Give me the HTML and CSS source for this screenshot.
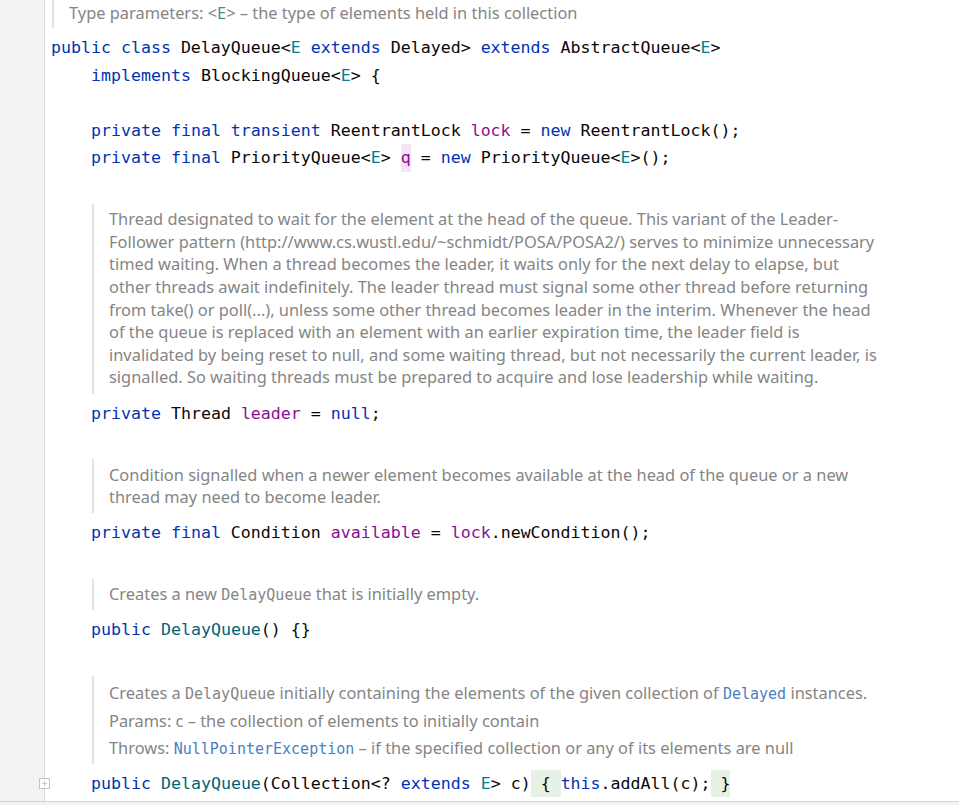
FILE: index.html
```html
<!DOCTYPE html>
<html>
<head>
<meta charset="utf-8">
<link rel="stylesheet" href="styles.css">
</head>
<body>
<div class="window">
  <div class="editor">
    <div class="gutter"></div>
    <svg class="fold" width="11" height="11" viewBox="0 0 11 11"><rect x="0.5" y="0.5" width="10" height="10" fill="#fff" stroke="#c4c4c4"/><path d="M3 5.5h5M5.5 3v5" stroke="#c4c4c4" fill="none"/></svg>
    <div class="code">
      <div class="doc doc-top"><p>Type parameters: &lt;<span class="dtp">E</span>&gt; – the type of elements held in this collection</p></div>
      <div class="line"><span class="kw">public class</span> DelayQueue&lt;<span class="tp">E</span> <span class="kw">extends</span> Delayed&gt; <span class="kw">extends</span> AbstractQueue&lt;<span class="tp">E</span>&gt;</div>
      <div class="line ind"><span class="kw">implements</span> BlockingQueue&lt;<span class="tp">E</span>&gt; {</div>
      <div class="line"></div>
      <div class="line ind"><span class="kw">private final transient</span> ReentrantLock <span class="fld">lock</span> = <span class="kw">new</span> ReentrantLock();</div>
      <div class="line ind"><span class="kw">private final</span> PriorityQueue&lt;<span class="tp">E</span>&gt; <span class="fld hl">q</span> = <span class="kw">new</span> PriorityQueue&lt;<span class="tp">E</span>&gt;();</div>
      <div class="line"></div>
      <div class="doc"><p>Thread designated to wait for the element at the head of the queue. This variant of the Leader-<br>Follower pattern (http://www.cs.wustl.edu/~schmidt/POSA/POSA2/) serves to minimize unnecessary<br>timed waiting. When a thread becomes the leader, it waits only for the next delay to elapse, but<br>other threads await indefinitely. The leader thread must signal some other thread before returning<br>from take() or poll(...), unless some other thread becomes leader in the interim. Whenever the head<br>of the queue is replaced with an element with an earlier expiration time, the leader field is<br>invalidated by being reset to null, and some waiting thread, but not necessarily the current leader, is<br>signalled. So waiting threads must be prepared to acquire and lose leadership while waiting.</p></div>
      <div class="line ind"><span class="kw">private</span> Thread <span class="fld">leader</span> = <span class="kw">null</span>;</div>
      <div class="line"></div>
      <div class="doc"><p>Condition signalled when a newer element becomes available at the head of the queue or a new<br>thread may need to become leader.</p></div>
      <div class="line ind"><span class="kw">private final</span> Condition <span class="fld">available</span> = <span class="fld">lock</span>.newCondition();</div>
      <div class="line"></div>
      <div class="doc"><p>Creates a new <code>DelayQueue</code> that is initially empty.</p></div>
      <div class="line ind"><span class="kw">public</span> <span class="ctor">DelayQueue</span>() {}</div>
      <div class="line"></div>
      <div class="doc doc-sections">
        <p>Creates a <code>DelayQueue</code> initially containing the elements of the given collection of <code class="lnk">Delayed</code> instances.</p>
        <p>Params: c – the collection of elements to initially contain</p>
        <p>Throws: <code class="lnk">NullPointerException</code> – if the specified collection or any of its elements are null</p>
      </div>
      <div class="line ind"><span class="kw">public</span> <span class="ctor">DelayQueue</span>(Collection&lt;? <span class="kw">extends</span> <span class="tp">E</span>&gt; c)<span class="folded"> { </span><span class="kw">this</span>.addAll(c);<span class="folded"> }</span></div>
    </div>
  </div>
  <div class="bottom"></div>
</div>
</body>
</html>
```
FILE: styles.css
```css
html, body {
  margin: 0;
  padding: 0;
  background: #ffffff;
}

.window {
  width: 959px;
  height: 805px;
  overflow: hidden;
  display: flex;
  flex-direction: column;
}

.editor {
  position: relative;
  height: 801px;
  flex: none;
  display: flex;
  flex-direction: row;
}

.gutter {
  width: 44px;
  flex: none;
  background: #f2f2f2;
  border-right: 1px solid #dcdcdc;
}

.fold {
  position: absolute;
  left: 39px;
  top: 778px;
}

.code {
  flex: 1;
  padding-left: 6px;
  font-family: "DejaVu Sans Mono", "Liberation Mono", monospace;
  font-size: 16.6px;
  color: #080808;
}

.line {
  height: 27.5px;
  line-height: 27.5px;
  white-space: pre;
}

.ind {
  padding-left: 40px;
}

.kw { color: #0033b3; }
.tp { color: #007e8a; }
.fld { color: #871094; }
.ctor { color: #00627a; }
.hl { background: #f7e3f4; display: inline-block; height: 27.5px; }
.folded { background: #e6f2e4; display: inline-block; height: 27.5px; }

.doc {
  margin: 4.5px 0 6px 41px;
  padding: 4.5px 0 4.5px 15px;
  border-left: 2px solid #e3e3e3;
  font-family: "Noto Sans", "Open Sans", sans-serif;
  font-size: 16.4px;
  line-height: 22.6px;
  color: #858585;
  white-space: nowrap;
}

.doc p {
  margin: 0;
}

.doc-top {
  margin: 0 0 6px 1px;
  padding: 1.7px 0 4px 15px;
}

.doc-sections {
  padding: 3.4px 0 2px 15px;
  line-height: 27.5px;
}

.doc-sections p {
  height: 27.5px;
}

.doc code {
  font-family: "DejaVu Sans Mono", "Liberation Mono", monospace;
  font-size: 15px;
  line-height: 1;
  color: #858585;
}

.doc code.lnk {
  color: #4a80c0;
}

.dtp {
  color: #3d8f96;
}

.bottom {
  flex: 1;
  background: #f2f2f2;
  border-top: 1px solid #d4d4d4;
}
```
